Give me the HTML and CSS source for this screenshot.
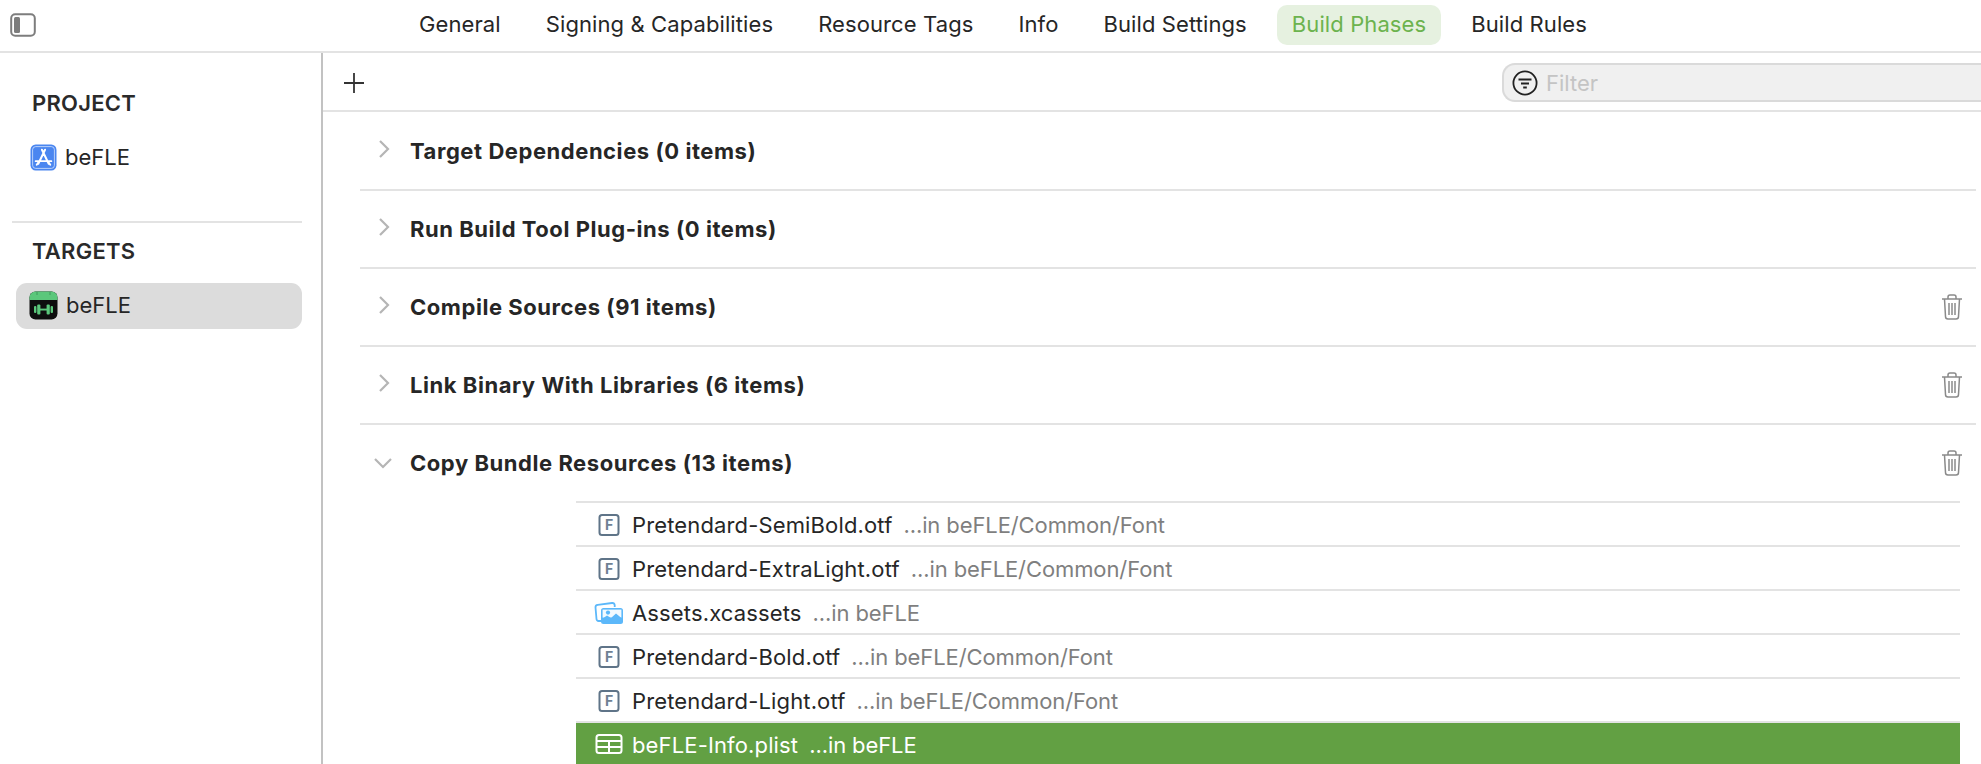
FILE: index.html
```html
<!DOCTYPE html>
<html lang="en">
<head>
<meta charset="utf-8">
<title>Build Phases</title>
<link rel="stylesheet" href="styles.css">
</head>
<body>
<div class="app">
  <header class="topbar">
    <svg class="toggle" viewBox="0 0 26 24" width="26" height="24"><rect x="1.2" y="1.2" width="23.6" height="21.6" rx="4" fill="none" stroke="#7d7d7d" stroke-width="2"/><rect x="4" y="4" width="6" height="16" rx="1.5" fill="#7d7d7d"/></svg>
    <nav class="tabs">
      <span class="tab">General</span>
      <span class="tab">Signing &amp; Capabilities</span>
      <span class="tab">Resource Tags</span>
      <span class="tab">Info</span>
      <span class="tab">Build Settings</span>
      <span class="tab active">Build Phases</span>
      <span class="tab">Build Rules</span>
    </nav>
  </header>
  <div class="main">
    <aside class="sidebar">
      <div class="side-group first">
        <h2 class="side-title">PROJECT</h2>
        <div class="side-item">
          <svg class="side-icon" viewBox="0 0 26 26" width="27" height="27"><rect x="0.5" y="0.5" width="25" height="25" rx="5" fill="#4a86f0"/><rect x="2.5" y="2.5" width="21" height="21" rx="3" fill="none" stroke="#cfe0fc" stroke-width="0.8"/><path d="M14.5 5.5 L8 19 M11.5 5.5 L18 19 M5.5 16.5 H20.5 M6.5 20 L8 18 M19.5 20 L18 18" fill="none" stroke="#fff" stroke-width="1.9" stroke-linecap="round"/></svg>
          <span>beFLE</span>
        </div>
      </div>
      <div class="side-group">
        <h2 class="side-title">TARGETS</h2>
        <div class="side-item selected">
          <svg class="side-icon target" viewBox="0 0 29 29" width="29" height="29"><rect x="0.5" y="0.5" width="28" height="28" rx="6" fill="#0e0e0e"/><path d="M0.5 9 V6.5 a6 6 0 0 1 6-6 H22.5 a6 6 0 0 1 6 6 V9 Z" fill="#5bc77b"/><path d="M8 1 v3 M21 1 v3" stroke="#3f9a5c" stroke-width="1"/><g fill="#5bc77b"><rect x="5" y="15" width="2.4" height="7" rx="1"/><rect x="8.2" y="13.5" width="3.2" height="10" rx="1"/><rect x="17.6" y="13.5" width="3.2" height="10" rx="1"/><rect x="21.6" y="15" width="2.4" height="7" rx="1"/><rect x="11" y="17.6" width="7" height="1.9"/></g></svg>
          <span>beFLE</span>
        </div>
      </div>
    </aside>
    <main class="content">
      <div class="toolbar">
        <svg class="plus" viewBox="0 0 22 22" width="22" height="22"><path d="M11 1 V21 M1 11 H21" stroke="#333" stroke-width="1.8"/></svg>
        <div class="filter">
          <svg viewBox="0 0 26 26" width="26" height="26"><circle cx="13" cy="13" r="11.6" fill="none" stroke="#222" stroke-width="1.8"/><path d="M6.5 9.5 H19.5 M9 13.5 H17 M11.2 17.5 H14.8" stroke="#222" stroke-width="1.9"/></svg>
          <span>Filter</span>
        </div>
      </div>
      <div class="phases">
        <section class="phase">
          <div class="phase-head">
            <svg class="chev" viewBox="0 0 12 20" width="12" height="20"><path d="M2 2 L10 10 L2 18" fill="none" stroke="#b5b5b5" stroke-width="2.2"/></svg>
            <span class="phase-name">Target Dependencies (0 items)</span>
          </div>
        </section>
        <section class="phase">
          <div class="phase-head">
            <svg class="chev" viewBox="0 0 12 20" width="12" height="20"><path d="M2 2 L10 10 L2 18" fill="none" stroke="#b5b5b5" stroke-width="2.2"/></svg>
            <span class="phase-name">Run Build Tool Plug-ins (0 items)</span>
          </div>
        </section>
        <section class="phase">
          <div class="phase-head">
            <svg class="chev" viewBox="0 0 12 20" width="12" height="20"><path d="M2 2 L10 10 L2 18" fill="none" stroke="#b5b5b5" stroke-width="2.2"/></svg>
            <span class="phase-name">Compile Sources (91 items)</span>
            <svg class="trash" viewBox="0 0 22 26" width="22" height="26"><path d="M1 5 H21 M7 5 V3 a2 2 0 0 1 2-2 H13 a2 2 0 0 1 2 2 V5 M3.5 5 L4.5 22.5 a2.5 2.5 0 0 0 2.5 2.5 H15 a2.5 2.5 0 0 0 2.5-2.5 L18.5 5 M8 9 V21 M11 9 V21 M14 9 V21" fill="none" stroke="#8a8a8a" stroke-width="1.5"/></svg>
          </div>
        </section>
        <section class="phase">
          <div class="phase-head">
            <svg class="chev" viewBox="0 0 12 20" width="12" height="20"><path d="M2 2 L10 10 L2 18" fill="none" stroke="#b5b5b5" stroke-width="2.2"/></svg>
            <span class="phase-name">Link Binary With Libraries (6 items)</span>
            <svg class="trash" viewBox="0 0 22 26" width="22" height="26"><path d="M1 5 H21 M7 5 V3 a2 2 0 0 1 2-2 H13 a2 2 0 0 1 2 2 V5 M3.5 5 L4.5 22.5 a2.5 2.5 0 0 0 2.5 2.5 H15 a2.5 2.5 0 0 0 2.5-2.5 L18.5 5 M8 9 V21 M11 9 V21 M14 9 V21" fill="none" stroke="#8a8a8a" stroke-width="1.5"/></svg>
          </div>
        </section>
        <section class="phase open">
          <div class="phase-head">
            <svg class="chev down" viewBox="0 0 20 12" width="20" height="12"><path d="M2 2 L10 10 L18 2" fill="none" stroke="#b5b5b5" stroke-width="2.2"/></svg>
            <span class="phase-name">Copy Bundle Resources (13 items)</span>
            <svg class="trash" viewBox="0 0 22 26" width="22" height="26"><path d="M1 5 H21 M7 5 V3 a2 2 0 0 1 2-2 H13 a2 2 0 0 1 2 2 V5 M3.5 5 L4.5 22.5 a2.5 2.5 0 0 0 2.5 2.5 H15 a2.5 2.5 0 0 0 2.5-2.5 L18.5 5 M8 9 V21 M11 9 V21 M14 9 V21" fill="none" stroke="#8a8a8a" stroke-width="1.5"/></svg>
          </div>
          <ul class="files">
            <li class="file">
              <svg class="file-icon" viewBox="0 0 26 26" width="26" height="26"><rect x="3.5" y="3" width="19" height="20" rx="2.5" fill="#fff" stroke="#5f7488" stroke-width="2"/><text x="13" y="18" text-anchor="middle" class="glyph">F</text></svg>
              <span class="fname">Pretendard-SemiBold.otf</span><span class="fpath">...in beFLE/Common/Font</span>
            </li>
            <li class="file">
              <svg class="file-icon" viewBox="0 0 26 26" width="26" height="26"><rect x="3.5" y="3" width="19" height="20" rx="2.5" fill="#fff" stroke="#5f7488" stroke-width="2"/><text x="13" y="18" text-anchor="middle" class="glyph">F</text></svg>
              <span class="fname">Pretendard-ExtraLight.otf</span><span class="fpath">...in beFLE/Common/Font</span>
            </li>
            <li class="file">
              <svg class="file-icon" viewBox="0 0 30 26" width="30" height="26"><path d="M7 21 H4.5 a2 2 0 0 1-2-2 L1.5 7.5 a2.5 2.5 0 0 1 2.2-2.7 L18 3 a2.5 2.5 0 0 1 2.7 2.2 V7" fill="none" stroke="#5cb8fa" stroke-width="1.8"/><rect x="7" y="8" width="22" height="16" rx="2.5" fill="#5cb8fa"/><rect x="8.6" y="9.6" width="18.8" height="8" fill="#fff" opacity="0.92"/><circle cx="14" cy="12.6" r="2.1" fill="#5cb8fa"/><path d="M8 19 L13 15.5 L17 18 L22 13.5 L28 18.5 V22 H8 Z" fill="#5cb8fa"/></svg>
              <span class="fname">Assets.xcassets</span><span class="fpath">...in beFLE</span>
            </li>
            <li class="file">
              <svg class="file-icon" viewBox="0 0 26 26" width="26" height="26"><rect x="3.5" y="3" width="19" height="20" rx="2.5" fill="#fff" stroke="#5f7488" stroke-width="2"/><text x="13" y="18" text-anchor="middle" class="glyph">F</text></svg>
              <span class="fname">Pretendard-Bold.otf</span><span class="fpath">...in beFLE/Common/Font</span>
            </li>
            <li class="file">
              <svg class="file-icon" viewBox="0 0 26 26" width="26" height="26"><rect x="3.5" y="3" width="19" height="20" rx="2.5" fill="#fff" stroke="#5f7488" stroke-width="2"/><text x="13" y="18" text-anchor="middle" class="glyph">F</text></svg>
              <span class="fname">Pretendard-Light.otf</span><span class="fpath">...in beFLE/Common/Font</span>
            </li>
            <li class="file current">
              <svg class="file-icon" viewBox="0 0 28 22" width="28" height="22"><rect x="1.5" y="2" width="25" height="18" rx="2.5" fill="none" stroke="#fff" stroke-width="2"/><path d="M1.5 8 H26.5 M1.5 14 H26.5 M14 8 V20" stroke="#fff" stroke-width="2"/></svg>
              <span class="fname">beFLE-Info.plist</span><span class="fpath">...in beFLE</span>
            </li>
          </ul>
        </section>
      </div>
    </main>
  </div>
</div>
</body>
</html>
```
FILE: styles.css
```css
* { box-sizing: border-box; }
html, body { margin: 0; padding: 0; height: 100%; overflow: hidden; background: #fff; }
body { font-family: Inter, "Liberation Sans", sans-serif; font-size: 22px; color: #262626; }
.app { width: 1981px; height: 764px; display: flex; flex-direction: column; overflow: hidden; }

.topbar { height: 53px; flex: none; display: flex; align-items: flex-start; border-bottom: 2px solid #e3e3e3; padding-left: 10px; }
.toggle { margin-top: 13px; flex: none; }
.tabs { display: flex; margin-left: 368px; margin-top: 5px; gap: 15px; }
.tab { height: 40px; padding: 0 15px 2px; display: flex; align-items: center; border-radius: 10px; white-space: nowrap; letter-spacing: 0.1px; }
.tab.active { background: #e6f1e0; color: #6cb34e; }

.main { flex: 1; display: flex; min-height: 0; }
.sidebar { width: 323px; flex: none; border-right: 2px solid #c2c2c2; padding: 0 19px 0 12px; }
.side-group { border-top: 2px solid #e3e3e3; padding-top: 15px; }
.side-group.first { border-top: 0; padding-top: 37px; height: 168px; }
.side-title { margin: 0 0 0 20px; font-size: 22px; line-height: 26px; font-weight: 600; letter-spacing: 0.25px; color: #2a2a2a; }
.side-item { display: flex; align-items: center; gap: 8px; height: 46px; margin-top: 19px; padding: 0 0 2px 18px; }
.side-group:not(.first) .side-item { margin-left: 4px; padding-left: 13px; border-radius: 11px; gap: 8px; }
.side-item.selected { background: #dcdcdc; }
.side-group.first .side-item { margin-top: 19px; }

.content { flex: 1; min-width: 0; display: flex; flex-direction: column; }
.toolbar { height: 59px; flex: none; border-bottom: 2px solid #e3e3e3; display: flex; align-items: center; padding: 2px 0 0 20px; justify-content: space-between; }
.plus { flex: none; }
.filter { width: 479px; height: 39px; display: flex; align-items: center; gap: 8px; padding-left: 8px; background: #f0f0f0; border: 2px solid #dadada; border-right: 0; border-radius: 13px 0 0 13px; color: #c4c4c4; }

.phases { margin: 1px 5px 0 37px; }
.phase { border-bottom: 2px solid #e3e3e3; }
.phase.open { border-bottom: 0; }
.phase-head { height: 76px; display: flex; align-items: center; position: relative; padding-left: 50px; }
.phase-name { font-weight: 700; font-size: 22px; letter-spacing: 0.55px; color: #262626; }
.chev { position: absolute; left: 18px; top: 26px; }
.chev.down { left: 13px; top: 32px; }
.trash { margin-left: auto; margin-right: 13px; flex: none; }

.files { list-style: none; margin: 0 16px 0 216px; padding: 0; border-top: 2px solid #e3e3e3; }
.file { height: 44px; border-bottom: 2px solid #e3e3e3; display: flex; align-items: center; padding: 2px 0 0 56px; position: relative; }
.fname { color: #262626; letter-spacing: 0.14px; }
.fpath { margin-left: 11px; color: #7f7f7f; letter-spacing: -0.1px; }
.file-icon { position: absolute; left: 20px; top: 9px; }
.file:nth-child(3) .file-icon { left: 18px; }
.glyph { font-family: Inter, sans-serif; font-size: 14px; font-weight: 700; fill: #6f8193; }
.file.current { background: #62a043; border-bottom: 0; padding-top: 0; }
.file.current .fname, .file.current .fpath { color: #fff; }
.file.current .file-icon { left: 19px; top: 10px; }
```
